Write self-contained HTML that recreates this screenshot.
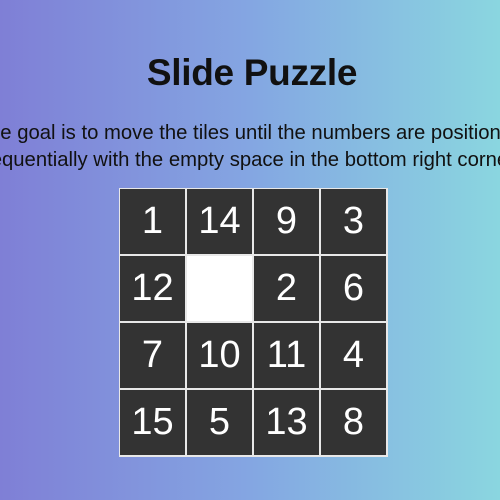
<!DOCTYPE html>
<html><head><style>
html,body{margin:0;width:500px;height:500px;overflow:hidden}
body{background:linear-gradient(90deg,#7f7fd6 0%,#84a6e2 50%,#8ad6e0 100%);font-family:"Liberation Sans",sans-serif;color:#111;position:relative}
h1{position:absolute;top:52px;left:2px;width:500px;margin:0;text-align:center;font-size:37px;font-weight:bold;letter-spacing:-0.3px}
.p{position:absolute;left:-250px;width:1000px;text-align:center;font-size:20.3px;white-space:nowrap}
.grid{position:absolute;left:119px;top:188px;width:269px;height:269px;background:#e8e8e8}
.t{position:absolute;width:65px;height:65px;background:#333;color:#fff;font-size:38px;display:flex;align-items:center;justify-content:center}
.e{background:#fff}
</style></head><body>
<h1>Slide Puzzle</h1>
<div class="p" style="top:122px">The goal is to move the tiles until the numbers are positioned</div>
<div class="p" style="top:149px">sequentially with the empty space in the bottom right corner.</div>
<div class="grid">
<div class="t" style="left:1px;top:1px">1</div>
<div class="t" style="left:68px;top:1px">14</div>
<div class="t" style="left:135px;top:1px">9</div>
<div class="t" style="left:202px;top:1px">3</div>
<div class="t" style="left:1px;top:68px">12</div>
<div class="t e" style="left:68px;top:68px"></div>
<div class="t" style="left:135px;top:68px">2</div>
<div class="t" style="left:202px;top:68px">6</div>
<div class="t" style="left:1px;top:135px">7</div>
<div class="t" style="left:68px;top:135px">10</div>
<div class="t" style="left:135px;top:135px">11</div>
<div class="t" style="left:202px;top:135px">4</div>
<div class="t" style="left:1px;top:202px">15</div>
<div class="t" style="left:68px;top:202px">5</div>
<div class="t" style="left:135px;top:202px">13</div>
<div class="t" style="left:202px;top:202px">8</div>
</div>
</body></html>
